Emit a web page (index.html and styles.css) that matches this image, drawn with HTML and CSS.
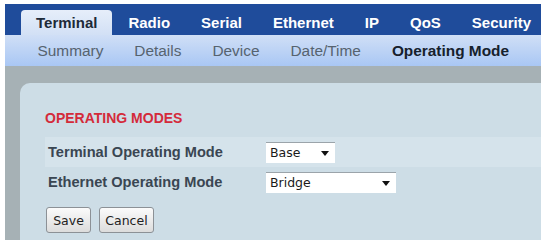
FILE: index.html
```html
<!DOCTYPE html>
<html lang="en">
<head>
    <meta charset="UTF-8">
    <title>Terminal - Operating Mode</title>
    <link rel="stylesheet" href="styles.css">
</head>
<body>

    <div class="page">
        <!-- Main tabs -->
        <div class="tabs">
            <div class="tab active">Terminal</div>
            <div class="tab">Radio</div>
            <div class="tab">Serial</div>
            <div class="tab">Ethernet</div>
            <div class="tab">IP</div>
            <div class="tab">QoS</div>
            <div class="tab">Security</div>
        </div>

        <!-- Sub navigation -->
        <div class="subnav">
            <div class="subnav-item">Summary</div>
            <div class="subnav-item">Details</div>
            <div class="subnav-item">Device</div>
            <div class="subnav-item">Date/Time</div>
            <div class="subnav-item current">Operating Mode</div>
        </div>

        <div class="content">
            <div class="panel">
                <h2>OPERATING MODES</h2>

                <div class="form-row highlight">
                    <label>Terminal Operating Mode</label>
                    <div class="select small">
                        <select>
                            <option>Base</option>
                            <option>Remote</option>
                        </select>
                    </div>
                </div>

                <div class="form-row">
                    <label>Ethernet Operating Mode</label>
                    <div class="select wide">
                        <select>
                            <option>Bridge</option>
                            <option>Router</option>
                        </select>
                    </div>
                </div>

                <div class="buttons">
                    <button class="btn save">Save</button>
                    <button class="btn cancel">Cancel</button>
                </div>
            </div>
        </div>
    </div>

</body>
</html>
```

FILE: styles.css
```css
* {
    margin: 0;
    padding: 0;
    box-sizing: border-box;
}

body {
    background: #FFFFFF;
    font-family: "Liberation Sans", Arial, sans-serif;
}

.page {
    width: 536px;
    margin: 4px 0 0 5px;
}

/* Main tab bar */
.tabs {
    height: 31px;
    background: #1f4c9b;
    display: flex;
    align-items: flex-end;
    padding-left: 16px;
}

.tab {
    height: 25px;
    line-height: 25px;
    padding: 0 15px;
    color: #FFFFFF;
    font-size: 15px;
    font-weight: bold;
    margin-right: 1px;
}

.tab.active {
    background: linear-gradient(to bottom, #e6eefa, #d2e0f5);
    color: #1d2a38;
    border-radius: 4px 4px 0 0;
}

/* Second level nav */
.subnav {
    height: 31px;
    background: linear-gradient(to bottom, #d0dff6, #a9c7f4);
    display: flex;
    padding-left: 17px;
}

.subnav-item {
    line-height: 31px;
    padding: 0 15.5px;
    font-size: 15.4px;
    color: #56636f;
}

.subnav-item.current {
    color: #16212c;
    font-weight: bold;
}

/* Content area */
.content {
    height: 174px;
    background: #a6b1b5;
    padding: 17px 0 0 15px;
}

.panel {
    height: 157px;
    background: #cddde6;
    border-radius: 10px 0 0 0;
    padding: 27px 0 0 25px;
}

.panel h2 {
    font-size: 14px;
    line-height: 16px;
    font-weight: bold;
    color: #d42a3a;
    margin-bottom: 11px;
}

.form-row {
    height: 30px;
    display: flex;
    align-items: center;
}

.form-row.highlight {
    background: #d5e3eb;
}

.form-row label {
    width: 221px;
    padding-left: 3px;
    font-size: 14.6px;
    font-weight: bold;
    color: #3a4652;
}

.select {
    position: relative;
    height: 21px;
    background: #FFFFFF;
    border-top: 1px solid #9ba4aa;
}

.select.small {
    width: 69px;
}

.select.wide {
    width: 130px;
}

.select select {
    appearance: none;
    -webkit-appearance: none;
    width: 100%;
    height: 20px;
    border: none;
    background: transparent;
    font-family: "DejaVu Sans", Tahoma, sans-serif;
    font-size: 12.5px;
    color: #1a1a1a;
    padding-left: 4px;
    outline: none;
}

.select::after {
    content: "";
    position: absolute;
    right: 6px;
    top: 8px;
    border-left: 4px solid transparent;
    border-right: 4px solid transparent;
    border-top: 5px solid #111111;
    pointer-events: none;
}

.buttons {
    display: flex;
    gap: 8px;
    margin-top: 10px;
    margin-left: 1px;
}

.btn {
    height: 26px;
    border: 1px solid #8c9196;
    border-radius: 3px;
    background: linear-gradient(to bottom, #fbfbfb, #dcdcdc);
    font-family: "DejaVu Sans", Tahoma, sans-serif;
    font-size: 12.5px;
    color: #222222;
    cursor: pointer;
}

.btn.save {
    width: 45px;
}

.btn.cancel {
    width: 55px;
}
```
